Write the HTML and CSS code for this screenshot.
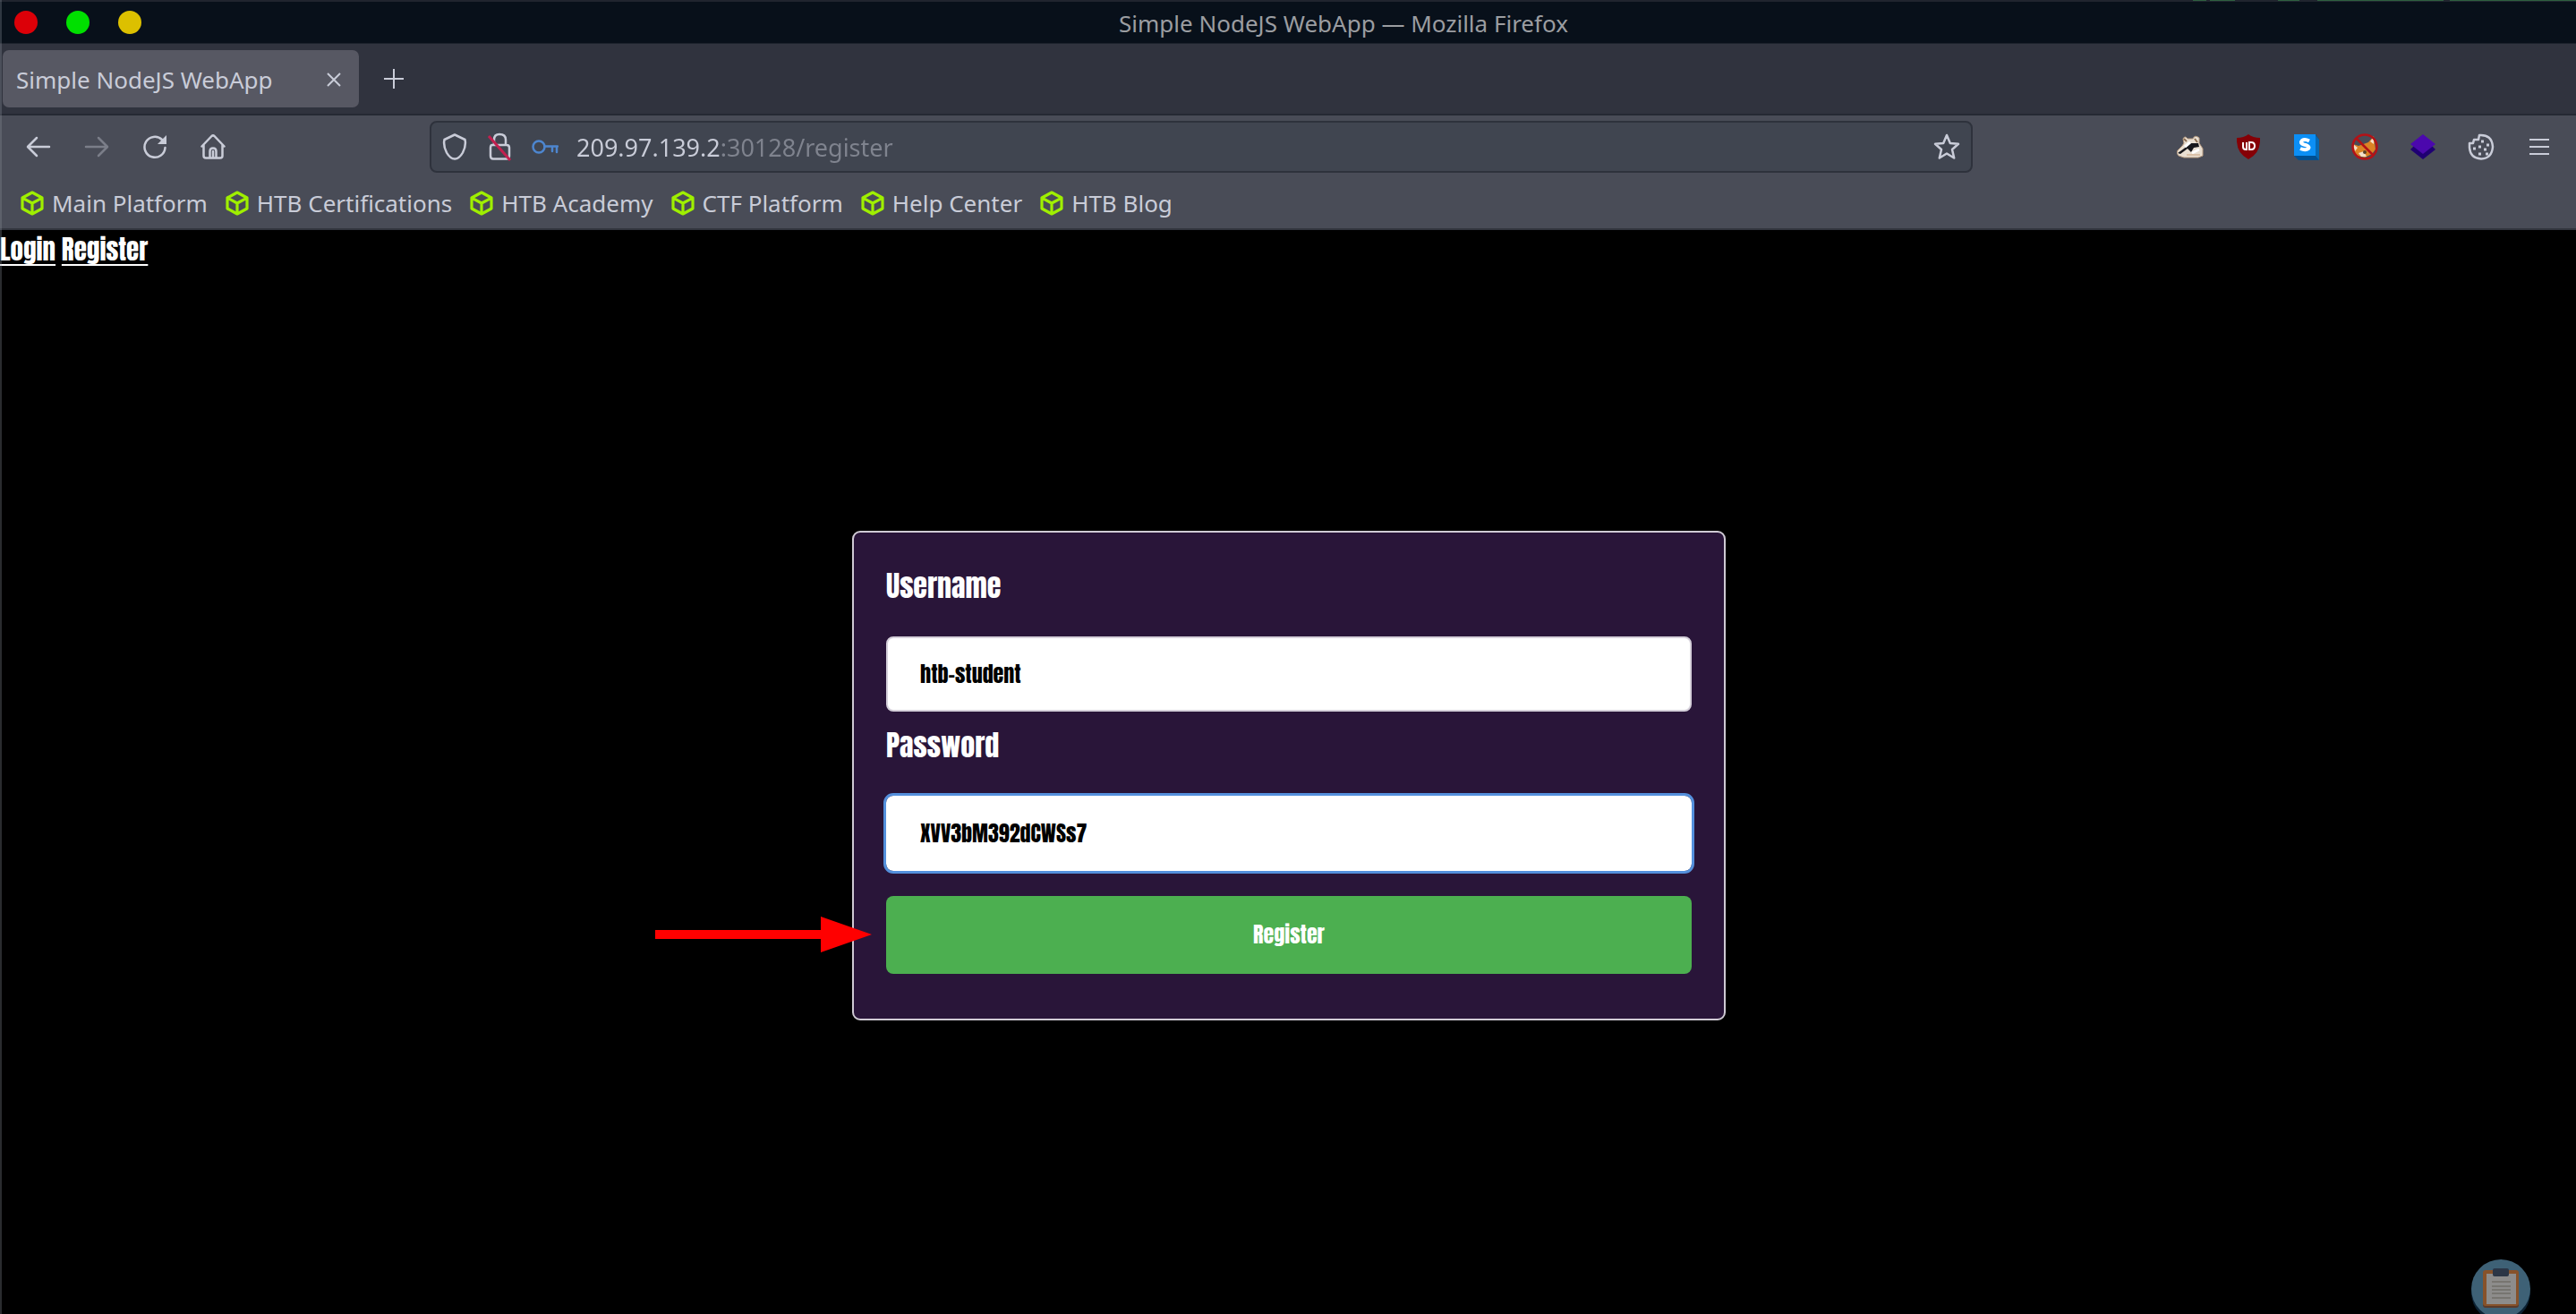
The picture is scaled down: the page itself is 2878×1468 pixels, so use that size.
FILE: index.html
```html
<!DOCTYPE html>
<html lang="en">
<head>
<meta charset="utf-8">
<title>Simple NodeJS WebApp</title>
<link rel="stylesheet" href="styles.css">
</head>
<body>
<svg class="defs" width="0" height="0" aria-hidden="true">
  <symbol id="cube" viewBox="0 0 26 28">
    <path d="M13 2 L24 8 V20 L13 26 L2 20 V8 Z M2.500 8.300 L13 14 L23.500 8.300 M13 14 V26" fill="none" stroke="#9fef00" stroke-width="3.200" stroke-linejoin="round"/>
  </symbol>
</svg>
<div class="window">
  <header class="titlebar">
    <div class="lights">
      <button class="light red" aria-label="Close"></button>
      <button class="light green" aria-label="Maximize"></button>
      <button class="light yellow" aria-label="Minimize"></button>
    </div>
    <div class="window-title">Simple NodeJS WebApp — Mozilla Firefox</div>
  </header>

  <div class="tabstrip">
    <div class="tab">
      <span>Simple NodeJS WebApp</span>
      <button class="tab-close" aria-label="Close tab"><svg width="16" height="16" viewBox="0 0 16 16"><path d="M1 1 L15 15 M15 1 L1 15" stroke="currentColor" stroke-width="2"/></svg></button>
    </div>
    <button class="tab-new" aria-label="New tab"><svg width="22" height="22" viewBox="0 0 22 22"><path d="M11 0 V22 M0 11 H22" stroke="currentColor" stroke-width="2"/></svg></button>
  </div>

  <nav class="toolbar" aria-label="Navigation">
    <div class="tools">
      <button class="tool" aria-label="Back"><svg width="28" height="28" viewBox="0 0 28 28"><path d="M26 14 H2.500 M12 4 L2 14 L12 24" class="line"/></svg></button>
      <button class="tool dim" aria-label="Forward"><svg width="28" height="28" viewBox="0 0 28 28"><path d="M2 14 H25.500 M16 4 L26 14 L16 24" class="line"/></svg></button>
      <button class="tool" aria-label="Reload"><svg width="28" height="28" viewBox="0 0 28 28"><path d="M22 6 A11.500 11.500 0 1 0 25.500 15" class="line"/><path d="M27 1 V11 H17 Z" fill="currentColor"/></svg></button>
      <button class="tool" aria-label="Home"><svg width="28" height="28" viewBox="0 0 28 28"><path d="M1.500 13.500 L12.500 2 Q14 .8 15.500 2 L26.500 13.500 M3.500 12 V24 Q3.500 26.500 6 26.500 H22 Q24.500 26.500 24.500 24 V12 M10.500 26 V19 Q10.500 15.500 14 15.500 Q17.500 15.500 17.500 19 V26 M14 19 V26" class="line"/></svg></button>
    </div>
    <div class="urlbar">
      <svg width="28" height="30" viewBox="0 0 28 30"><path d="M14 1.500 L25.500 7 Q27 14 23 21.500 Q19 28.500 14 28.500 Q9 28.500 5 21.500 Q1 14 2.500 7 Z" class="line"/></svg>
      <svg width="32" height="32" viewBox="-3 0 32 32"><path d="M7 14 V8 Q7 2 13 2 Q20 2 20 8 V14 M5 14 H21 Q24 14 24 17 V26 Q24 29.500 21 29.500 H6 Q3 29.500 3 26 V17 Q3 14 5 14 Z" class="line"/><path d="M1 4 L25 31" stroke="#c3204f" stroke-width="3"/></svg>
      <svg class="key" width="30" height="18" viewBox="0 0 30 18"><circle cx="8" cy="9" r="6.500" class="line"/><path d="M14.500 8.500 H29 M23 9 V14 M28 9 V15" class="line"/></svg>
      <input class="address" type="text" aria-label="Address" value="209.97.139.2:30128/register">
      <button class="star" aria-label="Bookmark this page"><svg width="30" height="30" viewBox="0 0 30 30"><path d="M15 2 L18.800 11 L28 11.800 L21 18 L23.200 27.500 L15 22.500 L6.800 27.500 L9 18 L2 11.800 L11.200 11 Z" class="line"/></svg></button>
    </div>
    <div class="tools">
      <button class="tool" aria-label="Privacy Badger"><svg width="30" height="26" viewBox="0 0 30 26">
        <path d="M1 17 L6 12 L8 9 L7 4 Q9 0 12 4 L18 4 Q20 -1 25 3 L25 9 L29 15 L29 23 L24 25 H8 L2 23 L0 20 Z" fill="#e9dfd2" stroke="#b79b80"/>
        <path d="M8 4 L11 7 M20 4 L23 8" stroke="#8c6d50" stroke-width="2"/>
        <path d="M1 20 L8 15 L15 9 L24 9 L25 13 L19 14 L16 19 L12 15 L4 21 Z" fill="#17171b"/>
        <path d="M9 13 L15 8 M17 20 L25 16" stroke="#fff" stroke-width="3"/>
        <path d="M11 22 L26 22" stroke="#d9c0a6" stroke-width="2"/></svg></button>
      <button class="tool" aria-label="uBlock Origin"><svg width="26" height="28" viewBox="0 0 26 28"><path d="M13 0 Q18 4 26 4 Q27 21 13 28 Q-1 21 0 4 Q8 4 13 0 Z" fill="#850006"/><path d="M7 9 V14 Q7 17 10 17 H11 V9 M14 9 V17 H16 Q20 17 20 13 Q20 9 16 9 Z" fill="none" stroke="#fff" stroke-width="2"/></svg></button>
      <button class="tool" aria-label="Stylus"><svg width="28" height="29" viewBox="0 0 28 29"><path d="M24 0 L28 6 V29 H5 L0 24 Z" fill="#004f91"/><path d="M24 1 L28 6 V29 L24 24 Z" fill="#0568b4"/><path d="M0 0 H24 V24 H0 Z" fill="#0c8ff5"/><path d="M17 7.500 Q12 5 9 7 Q6 10 11 11.500 Q18 13 16 16 Q13 18.500 7 16" fill="none" stroke="#fff" stroke-width="4"/></svg></button>
      <button class="tool" aria-label="FoxyProxy"><svg width="30" height="30" viewBox="0 0 30 30"><path d="M19 10 L25 3 L27 18 L23 23 L15 27 L7 25 L2 20 L2 12 L8 14 Z" fill="#db8324"/><path d="M2 12 L7 16 L4 20 Z M21 9 L25 4 L25 12 Z M8 22 L14 20 L17 26 L11 26 Z" fill="#f2dfc8"/><circle cx="15" cy="21" r="2" fill="#58402a"/><circle cx="15" cy="15" r="13.500" fill="none" stroke="#b31217" stroke-width="2.500"/><path d="M5.500 5.500 L24.500 24.500" stroke="#b31217" stroke-width="2.500"/></svg></button>
      <button class="tool" aria-label="Wappalyzer"><svg width="28" height="28" viewBox="0 0 28 28"><path d="M5 12 L0 17 L14 28 L28 17 L23 12 Z" fill="#1f0072"/><path d="M14 0 L28 11 L14 22 L0 11 Z" fill="#4b08ad"/></svg></button>
      <button class="tool" aria-label="Cookie editor"><svg width="30" height="30" viewBox="0 0 30 30"><path d="M13 2 Q27 1 28 15 Q27 28 15 28.500 Q3 28 2 16 L2 11 L6 11 L7 7 L12 7 Z" class="line"/><path d="M15 9 h3 M21 13 h3 M12 15 h3 M6 17 h3 M18 18 h3 M12 23 h3 M20 23 h3" stroke="currentColor" stroke-width="3"/></svg></button>
      <button class="tool" aria-label="Menu"><svg width="22" height="18" viewBox="0 0 22 18"><path d="M0 1 H22 M0 9 H22 M0 17 H22" stroke="currentColor" stroke-width="2"/></svg></button>
    </div>
  </nav>

  <nav class="bookmarks" aria-label="Bookmarks">
    <a href="#"><svg width="26" height="28"><use href="#cube"/></svg>Main Platform</a>
    <a href="#"><svg width="26" height="28"><use href="#cube"/></svg>HTB Certifications</a>
    <a href="#"><svg width="26" height="28"><use href="#cube"/></svg>HTB Academy</a>
    <a href="#"><svg width="26" height="28"><use href="#cube"/></svg>CTF Platform</a>
    <a href="#"><svg width="26" height="28"><use href="#cube"/></svg>Help Center</a>
    <a href="#"><svg width="26" height="28"><use href="#cube"/></svg>HTB Blog</a>
  </nav>

  <div class="page">
    <nav class="site-links" aria-label="Site"><a href="#">Login</a> <a href="#">Register</a></nav>
    <main class="content">
      <form class="card">
        <label for="username">Username</label>
        <input id="username" class="field" type="text" value="htb-student">
        <label for="password">Password</label>
        <input id="password" class="field focused" type="text" value="XVV3bM392dCWSs7">
        <button class="submit" type="button">Register</button>
        <svg class="arrow" width="242" height="40" viewBox="0 0 242 40" aria-hidden="true"><path d="M0 15 H185 V0 L242 20 L185 40 V25 H0 Z" fill="#f00"/></svg>
      </form>
    </main>
    <button class="clipboard" aria-label="Clipboard"><svg width="66" height="70" viewBox="0 0 66 70">
      <circle cx="33" cy="37" r="33" fill="#0c2234"/><circle cx="33" cy="33" r="33" fill="#3e6176"/>
      <rect x="13" y="14" width="40" height="40" rx="3" fill="#5a3a2a"/><rect x="13" y="12" width="40" height="40" rx="3" fill="#87522a"/>
      <rect x="17" y="16" width="33" height="34" fill="#8d8c8b"/>
      <path d="M23 25 H44 M23 30 H44 M23 34 H44 M23 38 H44 M23 43 H44" stroke="#777570" stroke-width="2"/>
      <rect x="24" y="10" width="18" height="9" rx="2" fill="#2c3646"/></svg></button>
  </div>
</div>
</body>
</html>
```
FILE: styles.css
```css
* { box-sizing: border-box; }

body {
  margin: 0;
  background: #000;
  color: #c9ccd8;
  font-family: "Noto Sans", sans-serif;
  font-size: 26px;
}

button {
  padding: 0;
  border: 0;
  background: none;
  color: inherit;
  font: inherit;
}

a { color: inherit; }
svg { display: block; flex: none; }
.defs { position: absolute; }
.line { fill: none; stroke: currentColor; stroke-width: 2.5; stroke-linecap: round; stroke-linejoin: round; }

.window {
  position: relative;
  display: flex;
  flex-direction: column;
  min-height: 100vh;
  overflow: hidden;
}

/* Window frame edge, drawn over everything at the left */
.window::before {
  content: "";
  position: absolute;
  inset: 0 auto 0 0;
  width: 2px;
  background: rgb(140 145 155 / 30%);
  z-index: 1;
}

.titlebar {
  position: relative;
  display: grid;
  grid-template-columns: 142px 1fr;
  align-items: center;
  height: 49px;
  padding-left: 16px;
  border-top: 2px solid #20252f;
  border-bottom: 1px solid #1c222c;
  background: #08101a;
  color: #9b9da1;
}

/* Sliver of the terminal showing behind the window */
.titlebar::after {
  content: "";
  position: absolute;
  top: -2px;
  right: 0;
  width: 428px;
  height: 1px;
  background: linear-gradient(to right, #2f6040 15px, #20252f 15px 19px, #2f6040 19px 47px, #20252f 47px 95px, #2f6040 95px 119px, #20252f 119px 139px, #2f6040 139px 280px, #20252f 280px 287px, #2f6040 287px);
}

.lights { display: flex; gap: 32px; }
.light { width: 26px; height: 26px; border-radius: 50%; }
.red { background: #dc0008; }
.green { background: #00e000; }
.yellow { background: #dcc000; }
.window-title { padding: 2px 34px 0 0; text-align: center; }

.tabstrip {
  display: flex;
  align-items: center;
  height: 80px;
  padding-left: 3px;
  border-bottom: 2px solid #252933;
  background: #30333e;
}

.tab {
  display: flex;
  align-items: center;
  justify-content: space-between;
  width: 398px;
  height: 64px;
  padding: 2px 20px 0 15px;
  border-radius: 7px;
  background: #575863;
}

.tab-new { margin-left: 28px; }

.toolbar {
  display: flex;
  align-items: center;
  justify-content: space-between;
  height: 70px;
  padding: 0 9px 0 10px;
  background: #494c57;
}

.tools { display: flex; }
.tool { display: grid; place-items: center; width: 65px; height: 56px; }
.dim { color: #7b7e89; }

.urlbar {
  display: flex;
  flex: 0 1 1724px;
  align-items: center;
  gap: 20px;
  height: 58px;
  padding: 0 12px;
  border: 2px solid #2e323c;
  border-radius: 8px;
  background: #404550;
}

.key { color: #4d86cf; }

.address {
  flex: 1;
  min-width: 0;
  padding: 0;
  border: 0;
  outline: 0;
  /* Host is bright; port and path are dimmed */
  background: linear-gradient(to right, #c9ccd8 161px, #7f838e 161px);
  background-clip: text;
  color: transparent;
  font: 27px "Noto Sans", sans-serif;
}

.bookmarks {
  display: flex;
  align-items: center;
  gap: 20px;
  height: 58px;
  padding: 0 23px;
  border-bottom: 2px solid #33363f;
  background: #494c57;
}

.bookmarks a { display: flex; align-items: center; gap: 9px; text-decoration: none; }

.page {
  position: relative;
  display: flex;
  flex: 1;
  flex-direction: column;
  color: #fff;
  font-family: Anton, "Liberation Sans Narrow", "Liberation Sans", sans-serif;
  font-size: 24px;
}

.site-links { height: 45px; font-size: 29px; line-height: 45px; }
.site-links a { text-underline-offset: 4px; text-decoration-thickness: 2px; }

.content {
  display: grid;
  flex: 1;
  place-items: center;
  padding: 0 0 38px 2px;
}

.card {
  position: relative;
  display: flex;
  flex-direction: column;
  width: 100%;
  max-width: 976px;
  padding: 36px 36px 50px;
  border: 2px solid #cfcad4;
  border-radius: 9px;
  background: #291539;
}

.card label {
  margin-bottom: 32px;
  font-size: 32px;
  line-height: 48px;
}

.field {
  height: 84px;
  margin: 0 0 14px;
  padding: 0 36px;
  border: 2px solid #d5d0da;
  border-radius: 8px;
  background: #fff;
  color: #000;
  font: inherit;
}

.focused {
  margin-bottom: 28px;
  border-color: #fff;
  outline: 3px solid #5490dc;
}

.submit {
  height: 87px;
  border-radius: 8px;
  background: #4caf50;
}

/* Callout arrow pointing at the submit button */
.arrow { position: absolute; right: calc(100% - 20px); bottom: 74px; }

.clipboard { position: absolute; right: 51px; bottom: -9px; }
```
